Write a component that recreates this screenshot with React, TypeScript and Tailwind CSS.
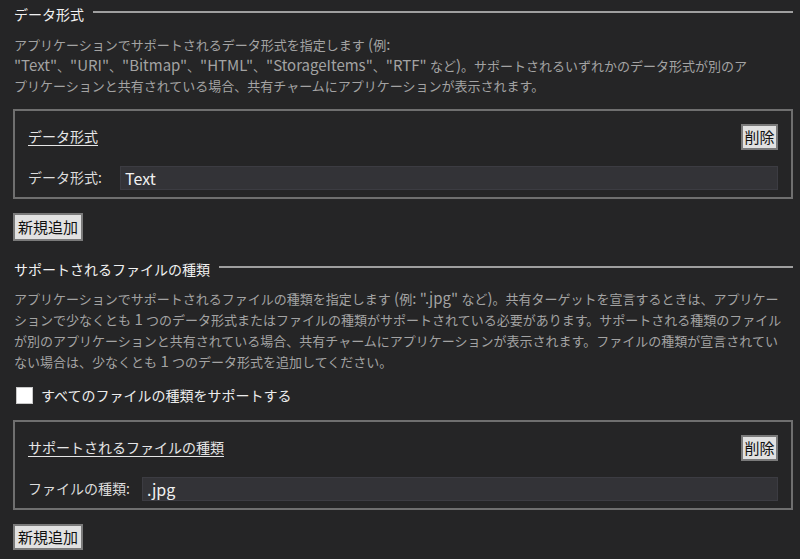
import React from 'react';

const font = { fontFamily: '"Noto Sans CJK JP", "Noto Sans", sans-serif' };

// latin runs are wider in the original UI font
function L({ children }: { children: React.ReactNode }) {
  return <span className="text-[15px] leading-none">{children}</span>;
}

function SectionHeader({ title }: { title: string }) {
  return (
    <div className="flex items-center h-[28px]">
      <span className="text-[14px] text-[#f1f1f1] whitespace-nowrap pl-[1px] pr-[9px]">{title}</span>
      <div className="flex-1 h-[2px] bg-[#9f9f9f] mb-[5px]" />
    </div>
  );
}

function GrayButton({ label, className = '' }: { label: string; className?: string }) {
  return (
    <button
      type="button"
      className={`flex items-center justify-center bg-[#e1e1e1] border-2 border-[#7a7a7a] text-[#111] text-[15px] leading-none ${className}`}
    >
      {label}
    </button>
  );
}

function ItemBox({ title, label, value, inputLeft }: { title: string; label: string; value: string; inputLeft: string }) {
  return (
    <div className="border-2 border-[#6f6f6f] h-[90px] pt-[13px] pl-[13px] pr-[13px]">
      <div className="flex items-center justify-between h-[26px]">
        <span className="text-[14px] text-[#e6e6e6] underline underline-offset-[3px]">{title}</span>
        <GrayButton label="削除" className="w-[37px] h-[26px] text-[14px]" />
      </div>
      <div className="flex items-center mt-[16px] h-[24px]">
        <span className={`text-[14px] text-[#dcdcdc] whitespace-nowrap ${inputLeft}`}>{label}</span>
        <div className="flex-1 h-[24px] bg-[#333337] border border-[#3c3c42] flex items-center px-[4px] text-[16px] text-[#f1f1f1]">
          {value}
        </div>
      </div>
    </div>
  );
}

export default function App() {
  return (
    <div className="w-full h-[559px] overflow-hidden bg-[#252526] pl-[13px] pr-[7px]" style={font}>
      <SectionHeader title="データ形式" />
      <div className="mt-[7px] text-[13px] leading-[20.5px] text-[#a3a3a3] whitespace-nowrap pl-[1px]">
        <div>アプリケーションでサポートされるデータ形式を指定します<L> (</L>例<L>:</L></div>
        <div>
          <L>"Text"</L>、<L>"URI"</L>、<L>"Bitmap"</L>、<L>"HTML"</L>、<L>"StorageItems"</L>、<L>"RTF" </L>など<L>)</L>。サポートされるいずれかのデータ形式が別のア
        </div>
        <div>プリケーションと共有されている場合、共有チャームにアプリケーションが表示されます。</div>
      </div>
      <div className="mt-[12px]">
        <ItemBox title="データ形式" label="データ形式:" value="Text" inputLeft="w-[92px]" />
      </div>
      <GrayButton label="新規追加" className="mt-[14px] w-[70px] h-[28px]" />

      <div className="mt-[15px]">
        <SectionHeader title="サポートされるファイルの種類" />
      </div>
      <div className="mt-[4px] text-[13px] leading-[21px] text-[#a3a3a3] whitespace-nowrap pl-[1px]">
        <div>
          アプリケーションでサポートされるファイルの種類を指定します<L> (</L>例<L>: ".jpg" </L>など<L>)</L>。共有ターゲットを宣言するときは、アプリケー
        </div>
        <div>ションで少なくとも<L> 1 </L>つのデータ形式またはファイルの種類がサポートされている必要があります。サポートされる種類のファイル</div>
        <div>が別のアプリケーションと共有されている場合、共有チャームにアプリケーションが表示されます。ファイルの種類が宣言されてい</div>
        <div>ない場合は、少なくとも<L> 1 </L>つのデータ形式を追加してください。</div>
      </div>
      <label className="mt-[14px] flex items-center h-[20px] pl-[3px] gap-[8px]">
        <span className="w-[17px] h-[17px] bg-white border border-[#c8c8c8]" />
        <span className="text-[14px] text-[#ececec]">すべてのファイルの種類をサポートする</span>
      </label>
      <div className="mt-[14px]">
        <ItemBox title="サポートされるファイルの種類" label="ファイルの種類:" value=".jpg" inputLeft="w-[114px]" />
      </div>
      <GrayButton label="新規追加" className="mt-[14px] w-[70px] h-[26px]" />
    </div>
  );
}
